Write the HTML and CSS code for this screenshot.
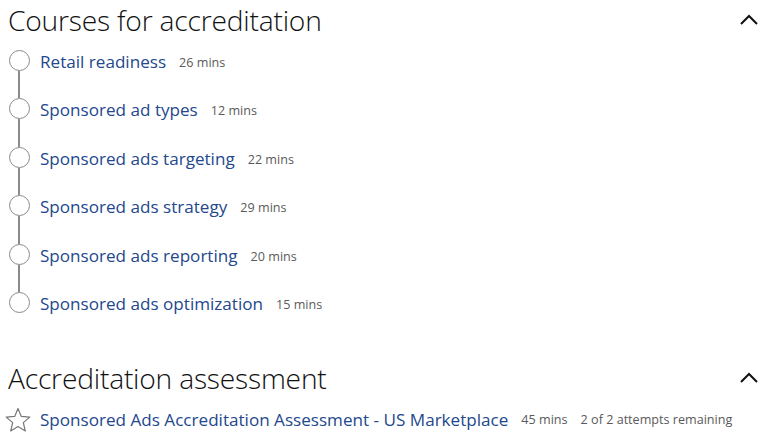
FILE: index.html
```html
<!DOCTYPE html>
<html lang="en">
<head>
    <meta charset="UTF-8" />
    <meta name="viewport" content="width=device-width, initial-scale=1" />
    <title>Accreditation</title>
    <link rel="stylesheet" href="styles.css">
</head>
<body>
    <section class="section">
        <div class="section-head">
            <h2>Courses for accreditation</h2>
            <svg class="chevron" width="20" height="14" viewBox="0 0 20 14"><path d="M2 11 L10 3 L18 11" fill="none" stroke="#111" stroke-width="2"/></svg>
        </div>
        <ul class="courses">
            <li><span class="marker"><span class="dot"></span><span class="line"></span></span><a href="#">Retail readiness</a><span class="meta">26 mins</span></li>
            <li><span class="marker"><span class="dot"></span><span class="line"></span></span><a href="#">Sponsored ad types</a><span class="meta">12 mins</span></li>
            <li><span class="marker"><span class="dot"></span><span class="line"></span></span><a href="#">Sponsored ads targeting</a><span class="meta">22 mins</span></li>
            <li><span class="marker"><span class="dot"></span><span class="line"></span></span><a href="#">Sponsored ads strategy</a><span class="meta">29 mins</span></li>
            <li><span class="marker"><span class="dot"></span><span class="line"></span></span><a href="#">Sponsored ads reporting</a><span class="meta">20 mins</span></li>
            <li><span class="marker"><span class="dot"></span></span><a href="#">Sponsored ads optimization</a><span class="meta">15 mins</span></li>
        </ul>
    </section>

    <section class="section assessment">
        <div class="section-head">
            <h2>Accreditation assessment</h2>
            <svg class="chevron" width="20" height="14" viewBox="0 0 20 14"><path d="M2 11 L10 3 L18 11" fill="none" stroke="#111" stroke-width="2"/></svg>
        </div>
        <div class="exam">
            <svg class="star" width="28" height="28" viewBox="0 0 28 28"><path d="M14 2.5 L17.3 10.4 L25.8 11.1 L19.3 16.6 L21.3 25 L14 20.5 L6.7 25 L8.7 16.6 L2.2 11.1 L10.7 10.4 Z" fill="none" stroke="#777" stroke-width="1.2" stroke-linejoin="round"/></svg>
            <a href="#">Sponsored Ads Accreditation Assessment - US Marketplace</a>
            <span class="meta">45 mins</span>
            <span class="meta">2 of 2 attempts remaining</span>
        </div>
    </section>
</body>
</html>
```

FILE: styles.css
```css
:root {
    --link: #23488c;
    --meta: #5a5a5a;
    --rail: #8a8a8a;
    --title: #111;
}
body {
    margin: 0;
    padding: 0 8px;
    font-family: "Open Sans", Arial, sans-serif;
    background: #fff;
    color: var(--title);
}
.section-head {
    display: flex;
    align-items: center;
    justify-content: space-between;
    height: 40px;
}
h2 {
    margin: 0;
    font-size: 28.2px;
    font-weight: 300;
    letter-spacing: -0.2px;
}
.chevron {
    margin-right: 3px;
}
.courses {
    list-style: none;
    margin: 10px 0 0 0;
    padding: 0;
}
.courses li {
    display: flex;
    align-items: flex-start;
    height: 48.4px;
}
.marker {
    display: flex;
    flex-direction: column;
    align-items: center;
    width: 22px;
    height: 100%;
    margin-right: 10px;
}
.dot {
    width: 19px;
    height: 19px;
    border: 1.3px solid var(--rail);
    border-radius: 50%;
    flex: none;
}
.line {
    flex: 1;
    width: 1.3px;
    background: var(--rail);
}
.courses a, .exam a {
    color: var(--link);
    text-decoration: none;
    font-size: 17.1px;
    line-height: 24px;
}
.meta {
    color: var(--meta);
    font-size: 12.6px;
    font-weight: 500;
    margin-left: 13px;
    line-height: 26px;
}
.assessment {
    margin-top: 18px;
}
.exam {
    display: flex;
    align-items: center;
    margin-top: 8px;
    margin-left: -4px;
}
.star {
    margin-right: 8px;
}
```
